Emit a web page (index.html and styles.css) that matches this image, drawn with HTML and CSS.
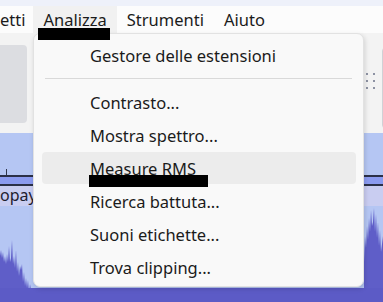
FILE: index.html
```html
<!DOCTYPE html>
<html lang="it">
<head>
<meta charset="utf-8">
<link rel="stylesheet" href="styles.css">
</head>
<body>
<div class="app">
  <div class="strip"></div>
  <div class="menubar">
    <span class="mitem first">etti</span>
    <span class="mitem active">Analizza<span class="redact redact-menu"></span></span>
    <span class="mitem">Strumenti</span>
    <span class="mitem">Aiuto</span>
  </div>
  <div class="toolbar">
    <div class="panel left"></div>
    <div class="grip">
      <i></i><i></i><i></i><i></i><i></i><i></i>
    </div>
    <div class="panel right"></div>
  </div>
  <div class="tracks">
    <svg class="wave" width="383" height="169" viewBox="0 133 383 169" xmlns="http://www.w3.org/2000/svg">
      <rect x="0" y="133" width="383" height="169" fill="#b5c6f3"/>
      <rect x="6" y="169" width="1" height="6" fill="#30364d"/>
      <rect x="0" y="175" width="383" height="2" fill="#2b3048"/>
      <rect x="0" y="177" width="383" height="7" fill="#8b9bf0"/>
      <rect x="0" y="184" width="383" height="2" fill="#2b3048"/>
      <rect x="0" y="186" width="383" height="20" fill="#c9cdf1"/>
      <text x="0" y="201" font-family="Noto Sans, sans-serif" font-size="16" fill="#1e2030">opay</text>
      <path fill="#5f5ec8" d="M0 256 L1 250 L2 258 L3 252 L4 262 L5 256 L6 264 L7 254 L8 262 L9 246 L10 262 L11 258 L12 240 L13 264 L14 256 L15 268 L16 250 L17 272 L18 262 L19 276 L20 266 L21 270 L22 264 L23 282 L24 272 L25 286 L26 278 L27 288 L28 280 L29 292 L30 284 L31 290 L33 292 L33 302 L0 302 Z"/>
      <path fill="#5f5ec8" d="M364 262 L365 236 L366 248 L367 226 L368 240 L369 218 L370 232 L371 210 L372 226 L373 222 L374 208 L375 232 L376 214 L377 238 L378 222 L379 246 L380 230 L381 252 L383 236 L383 302 L364 302 Z"/>
      <rect x="0" y="288" width="383" height="14" fill="#5c5bc6"/>
    </svg>
  </div>

  <div class="popup">
    <div class="row">Gestore delle estensioni</div>
    <div class="sep"></div>
    <div class="row">Contrasto...</div>
    <div class="row">Mostra spettro...</div>
    <div class="row hover">Measure RMS<span class="redact redact-item"></span></div>
    <div class="row">Ricerca battuta...</div>
    <div class="row">Suoni etichette...</div>
    <div class="row">Trova clipping...</div>
  </div>
</div>
</body>
</html>
```

FILE: styles.css
```css
html, body {
  margin: 0;
  padding: 0;
}
body {
  width: 383px;
  height: 302px;
  overflow: hidden;
  font-family: "Noto Sans", "Open Sans", sans-serif;
  color: #1b1b1b;
}
.app {
  position: relative;
  width: 383px;
  height: 302px;
  display: flex;
  flex-direction: column;
  background: #f3f3f3;
}
.strip {
  height: 6px;
  background: #eef1fa;
}
.menubar {
  height: 27px;
  display: flex;
  align-items: stretch;
  background: #fcfcfc;
  font-size: 16.5px;
}
.mitem {
  position: relative;
  display: flex;
  align-items: center;
  padding: 0 10px 0 10px;
}
.mitem.first {
  padding: 0 8px 0 0;
}
.mitem.active {
  background: #f1f1f1;
}
.redact {
  position: absolute;
  background: #000;
}
.redact-menu {
  left: 5px;
  top: 22px;
  width: 72px;
  height: 12px;
  z-index: 5;
}
.toolbar {
  height: 100px;
  display: flex;
  align-items: flex-start;
  background: #f3f3f3;
  overflow: hidden;
}
.toolbar > * {
  flex-shrink: 0;
}
.panel {
  background: #dcdde1;
  border-radius: 4px;
}
.panel.left {
  width: 31px;
  height: 78px;
  margin: 12px 0 0 -4px;
}
.grip {
  display: grid;
  grid-template-columns: 2px 2px;
  column-gap: 5px;
  row-gap: 5px;
  margin: 40px 0 0 339px;
}
.grip i {
  display: block;
  width: 2px;
  height: 2px;
  background: #8d92a3;
}
.panel.right {
  width: 20px;
  height: 80px;
  margin: 14px 0 0 7px;
  background: #f0f0f2;
  border: 1px solid #d0d1d6;
}
.tracks {
  flex: 1;
  overflow: hidden;
}
.wave {
  display: block;
}
.popup {
  position: absolute;
  left: 33px;
  top: 33px;
  width: 331px;
  height: 254px;
  box-sizing: border-box;
  padding: 5px 0 0;
  background: #f9f9f9;
  border: 1px solid #e2e2e2;
  border-radius: 7px;
  box-shadow: 1px 2px 5px rgba(0, 0, 0, 0.14);
  display: flex;
  flex-direction: column;
  gap: 1px;
  font-size: 16.5px;
  z-index: 3;
}
.row {
  position: relative;
  height: 32px;
  display: flex;
  align-items: center;
  margin: 0 7px 0 8px;
  padding-left: 48px;
  border-radius: 4px;
}
.row.hover {
  background: #ececec;
}
.redact-item {
  left: 47px;
  top: 23px;
  width: 119px;
  height: 12px;
}
.sep {
  height: 1px;
  margin: 6px 11px 6px 11px;
  background: #d9d9d9;
}
```
